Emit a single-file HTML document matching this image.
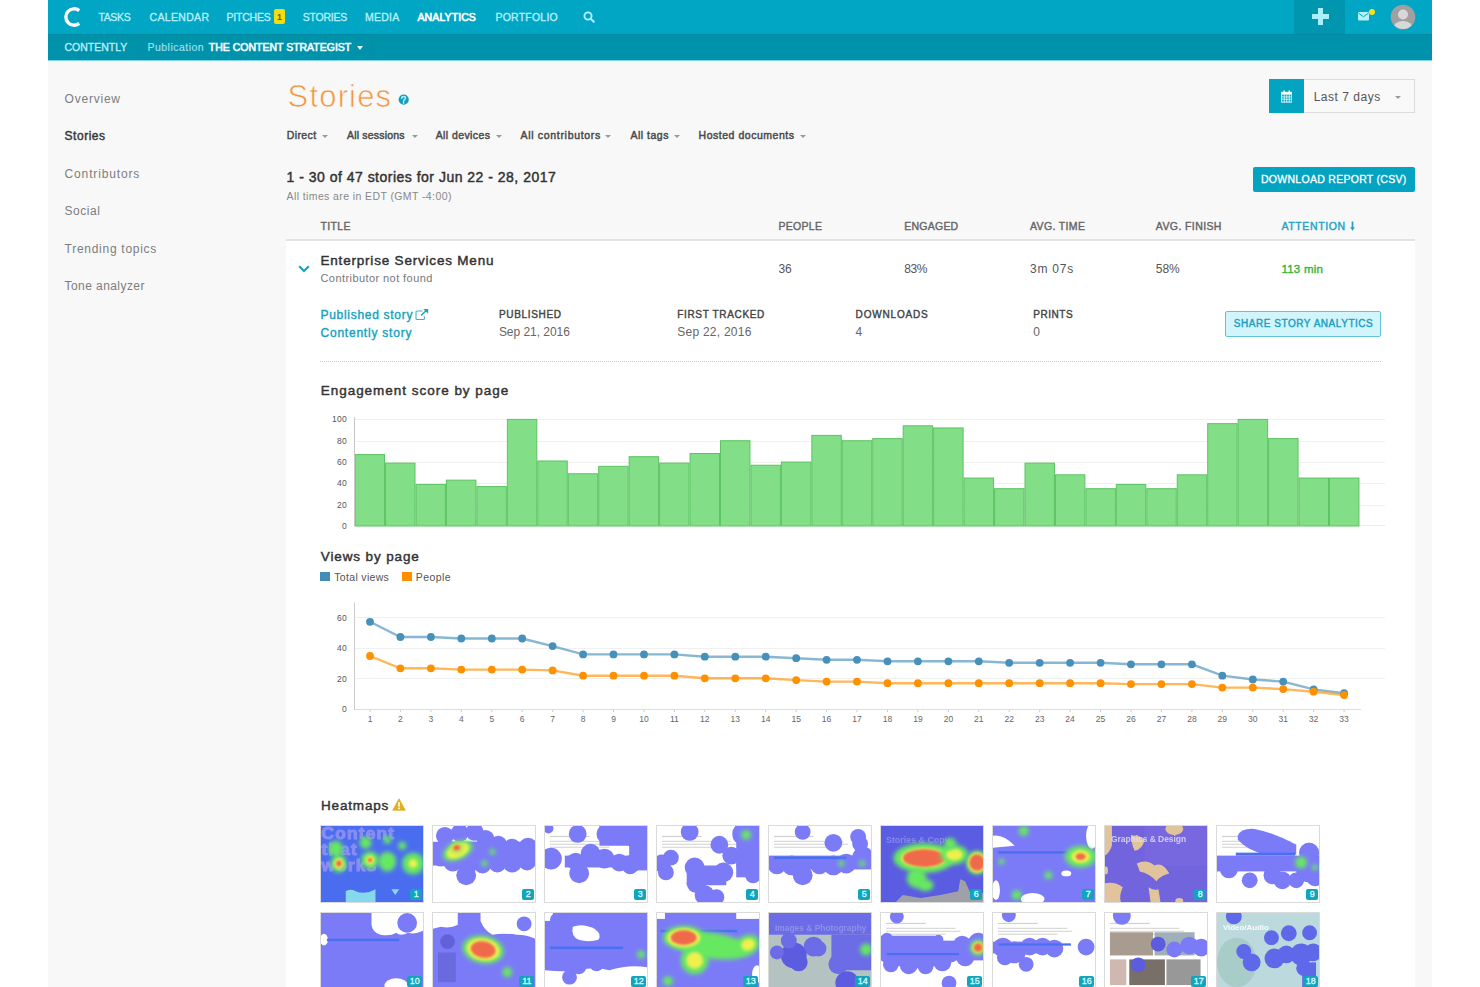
<!DOCTYPE html>
<html><head><meta charset="utf-8"><style>
html,body{margin:0;padding:0;background:#fff;width:1480px;height:987px;overflow:hidden;font-family:"Liberation Sans", sans-serif}
#app{position:absolute;left:48px;top:0;width:1384px;height:987px;background:#f8f8f8}
#nav{position:absolute;left:48px;top:0;width:1384px;height:34px;background:#02a6c5}
#sub{position:absolute;left:48px;top:34px;width:1384px;height:26px;background:#0092ab}
#subline{position:absolute;left:48px;top:60px;width:1384px;height:1px;background:#7fd6e6}
.t{position:absolute;white-space:nowrap;line-height:1;font-family:"Liberation Sans", sans-serif}
.caret{position:absolute;width:0;height:0}
.hm{position:absolute;width:104px;height:78px;border:1px solid #dadada;box-sizing:border-box;background:#fff;overflow:hidden}
.badge{position:absolute;right:1px;bottom:2px;width:12px;height:11px;border-radius:2px;background:#13a3bd;color:#d8fbff;font-size:9px;-webkit-text-stroke:0.3px #d8fbff;text-align:center;line-height:11px}
.b2{width:15px}
</style></head><body>
<div id="app"></div>
<div id="nav"></div>
<div id="sub"></div>
<div id="subline"></div>
<div style="position:absolute;left:48px;top:34px;width:1384px;height:1px;background:#038aa1"></div>
<div style="position:absolute;left:1294px;top:0;width:51px;height:34px;background:#0096b0"></div>
<div style="position:absolute;left:138px;top:34px;width:1px;height:26px;background:#078ca3"></div>
<div style="position:absolute;left:371.5px;top:34px;width:1px;height:26px;background:#078ca3"></div>
<svg style="position:absolute;left:62px;top:6px" width="20" height="22" viewBox="0 0 20 22"><path d="M17.2 4.6A8.2 8.2 0 1 0 17.2 17.4" fill="none" stroke="#fff" stroke-width="3.4"/></svg>
<svg style="position:absolute;left:1312px;top:8px" width="17" height="17" viewBox="0 0 17 17"><rect x="6" y="0" width="5" height="17" fill="#a8f0fc"/><rect x="0" y="6" width="17" height="5" fill="#a8f0fc"/></svg>
<svg style="position:absolute;left:1357px;top:8px" width="20" height="15" viewBox="0 0 20 15"><rect x="1" y="4" width="11" height="8.5" rx="1" fill="#b5f0fb"/><path d="M1.5 5L6.5 8.8L11.5 5" fill="none" stroke="#02a6c5" stroke-width="1"/><circle cx="15" cy="4" r="3" fill="#f3e220"/></svg>
<svg style="position:absolute;left:1390px;top:4px" width="26" height="26" viewBox="0 0 26 26"><defs><clipPath id="av"><circle cx="13" cy="13" r="12"/></clipPath></defs><circle cx="13" cy="13" r="12.3" fill="#a0a0a0"/><g clip-path="url(#av)"><circle cx="13" cy="10.5" r="5" fill="#d8d8d8"/><ellipse cx="13" cy="25" rx="10" ry="8" fill="#d8d8d8"/></g></svg>
<div class="t" style="left:98.4px;top:11.71px;font-size:10.5px;color:#b8f1fb;font-weight:normal;-webkit-text-stroke-width:0.3px;letter-spacing:-0.350px;">TASKS</div>
<div class="t" style="left:149.5px;top:11.71px;font-size:10.5px;color:#b8f1fb;font-weight:normal;-webkit-text-stroke-width:0.3px;letter-spacing:0.329px;">CALENDAR</div>
<div class="t" style="left:226.4px;top:11.71px;font-size:10.5px;color:#b8f1fb;font-weight:normal;-webkit-text-stroke-width:0.3px;letter-spacing:-0.183px;">PITCHES</div>
<div class="t" style="left:302.7px;top:11.71px;font-size:10.5px;color:#b8f1fb;font-weight:normal;-webkit-text-stroke-width:0.3px;letter-spacing:-0.233px;">STORIES</div>
<div class="t" style="left:365px;top:11.71px;font-size:10.5px;color:#b8f1fb;font-weight:normal;-webkit-text-stroke-width:0.3px;letter-spacing:0.250px;">MEDIA</div>
<div class="t" style="left:495.4px;top:11.71px;font-size:10.5px;color:#b8f1fb;font-weight:normal;-webkit-text-stroke-width:0.3px;letter-spacing:0.237px;">PORTFOLIO</div>
<div class="t" style="left:417.5px;top:11.71px;font-size:10.5px;color:#ffffff;font-weight:normal;-webkit-text-stroke-width:0.6px;letter-spacing:0.100px;">ANALYTICS</div>
<div style="position:absolute;left:274px;top:9px;width:11px;height:15px;background:#f3dc12;border-radius:2px;"></div>
<div class="t" style="left:277px;top:12.68px;font-size:9px;color:#5a5000;font-weight:normal;-webkit-text-stroke-width:0.2px;letter-spacing:0.000px;">1</div>
<svg style="position:absolute;left:583px;top:11px" width="12" height="12" viewBox="0 0 12 12"><circle cx="5" cy="5" r="3.6" fill="none" stroke="#b8f1fb" stroke-width="1.8"/><line x1="7.6" y1="7.6" x2="10.8" y2="10.8" stroke="#b8f1fb" stroke-width="2" stroke-linecap="round"/></svg>
<div class="t" style="left:64.5px;top:42.21px;font-size:10.5px;color:#b8f1fb;font-weight:normal;-webkit-text-stroke-width:0.3px;letter-spacing:-0.013px;">CONTENTLY</div>
<div class="t" style="left:147.5px;top:42.21px;font-size:10.5px;color:#9fe3f0;font-weight:normal;-webkit-text-stroke-width:0.15px;letter-spacing:0.480px;">Publication</div>
<div class="t" style="left:208.8px;top:42.21px;font-size:10.5px;color:#eefcff;font-weight:normal;-webkit-text-stroke-width:0.6px;letter-spacing:-0.005px;">THE CONTENT STRATEGIST</div>
<div class="caret" style="left:357.4px;top:45.5px;border-left:3.0px solid transparent;border-right:3.0px solid transparent;border-top:4px solid #e8fbff"></div>
<div class="t" style="left:64.6px;top:92.84px;font-size:12px;color:#7d7d7d;font-weight:normal;letter-spacing:0.771px;">Overview</div>
<div class="t" style="left:64.6px;top:130.34px;font-size:12px;color:#383838;font-weight:normal;-webkit-text-stroke-width:0.45px;letter-spacing:0.517px;">Stories</div>
<div class="t" style="left:64.6px;top:167.84px;font-size:12px;color:#7d7d7d;font-weight:normal;letter-spacing:0.845px;">Contributors</div>
<div class="t" style="left:64.6px;top:205.34px;font-size:12px;color:#7d7d7d;font-weight:normal;letter-spacing:0.520px;">Social</div>
<div class="t" style="left:64.6px;top:242.84px;font-size:12px;color:#7d7d7d;font-weight:normal;letter-spacing:0.721px;">Trending topics</div>
<div class="t" style="left:64.6px;top:280.34px;font-size:12px;color:#7d7d7d;font-weight:normal;letter-spacing:0.425px;">Tone analyzer</div>
<div class="t" style="left:287.6px;top:81.36px;font-size:31px;color:#f0963f;font-weight:normal;letter-spacing:1.167px;-webkit-text-stroke:0.7px #f8f8f8;">Stories</div>
<svg style="position:absolute;left:398px;top:94px" width="11" height="11" viewBox="0 0 11 11"><circle cx="5.7" cy="5.6" r="5.1" fill="#149fbf"/><path d="M3.7 4.3Q3.7 2.5 5.6 2.5Q7.5 2.5 7.5 4.1Q7.5 5.1 6.5 5.6Q5.6 6.1 5.6 7.2V7.6" fill="none" stroke="#aef4fc" stroke-width="1.5" stroke-linecap="round"/><circle cx="5.6" cy="8.9" r="0.85" fill="#aef4fc"/></svg>
<div class="t" style="left:286.7px;top:129.91px;font-size:10.5px;color:#4a4a4a;font-weight:normal;-webkit-text-stroke-width:0.45px;letter-spacing:0.420px;">Direct</div>
<div class="caret" style="left:322.4px;top:134.8px;border-left:3.0px solid transparent;border-right:3.0px solid transparent;border-top:3px solid #999"></div>
<div class="t" style="left:347px;top:129.91px;font-size:10.5px;color:#4a4a4a;font-weight:normal;-webkit-text-stroke-width:0.45px;letter-spacing:0.182px;">All sessions</div>
<div class="caret" style="left:411.6px;top:134.8px;border-left:3.0px solid transparent;border-right:3.0px solid transparent;border-top:3px solid #999"></div>
<div class="t" style="left:435.7px;top:129.91px;font-size:10.5px;color:#4a4a4a;font-weight:normal;-webkit-text-stroke-width:0.45px;letter-spacing:0.410px;">All devices</div>
<div class="caret" style="left:496.2px;top:134.8px;border-left:3.0px solid transparent;border-right:3.0px solid transparent;border-top:3px solid #999"></div>
<div class="t" style="left:520.5px;top:129.91px;font-size:10.5px;color:#4a4a4a;font-weight:normal;-webkit-text-stroke-width:0.45px;letter-spacing:0.687px;">All contributors</div>
<div class="caret" style="left:605.4px;top:134.8px;border-left:3.0px solid transparent;border-right:3.0px solid transparent;border-top:3px solid #999"></div>
<div class="t" style="left:630.5px;top:129.91px;font-size:10.5px;color:#4a4a4a;font-weight:normal;-webkit-text-stroke-width:0.45px;letter-spacing:0.500px;">All tags</div>
<div class="caret" style="left:673.8px;top:134.8px;border-left:3.0px solid transparent;border-right:3.0px solid transparent;border-top:3px solid #999"></div>
<div class="t" style="left:698.6px;top:129.91px;font-size:10.5px;color:#4a4a4a;font-weight:normal;-webkit-text-stroke-width:0.45px;letter-spacing:0.520px;">Hosted documents</div>
<div class="caret" style="left:800.3px;top:134.8px;border-left:3.0px solid transparent;border-right:3.0px solid transparent;border-top:3px solid #999"></div>
<div style="position:absolute;left:1269px;top:79px;width:146px;height:34px;border:1px solid #dcdcdc;background:#f9f9f9;box-sizing:border-box"></div>
<div style="position:absolute;left:1269px;top:79px;width:35px;height:34px;background:#03a3c2"></div>
<svg style="position:absolute;left:1280.5px;top:89.5px" width="11.5" height="13" viewBox="0 0 12 14"><rect x="0.5" y="2.5" width="11" height="10.5" fill="none" stroke="#fff" stroke-width="1"/><rect x="0.5" y="2.5" width="11" height="2.5" fill="#fff"/><rect x="2.5" y="0.5" width="1.5" height="3" fill="#fff"/><rect x="8" y="0.5" width="1.5" height="3" fill="#fff"/><path d="M0.5 7.5H11.5M0.5 10H11.5M3.3 5V13M6 5V13M8.7 5V13" stroke="#fff" stroke-width="0.8"/></svg>
<div class="t" style="left:1313.7px;top:90.84px;font-size:12px;color:#555;font-weight:normal;letter-spacing:0.510px;">Last 7 days</div>
<div class="caret" style="left:1395px;top:95.5px;border-left:3.0px solid transparent;border-right:3.0px solid transparent;border-top:3px solid #999"></div>
<div class="t" style="left:286.5px;top:170.45px;font-size:14px;color:#333;font-weight:normal;-webkit-text-stroke-width:0.45px;letter-spacing:0.493px;">1 - 30 of 47 stories for Jun 22 - 28, 2017</div>
<div class="t" style="left:286.5px;top:190.61px;font-size:10.5px;color:#888;font-weight:normal;letter-spacing:0.400px;">All times are in EDT (GMT -4:00)</div>
<div style="position:absolute;left:1252.5px;top:167px;width:162.5px;height:25px;background:#03a3c2;border-radius:2px"></div>
<div class="t" style="left:1261px;top:174.31px;font-size:10.5px;color:#ffffff;font-weight:normal;-webkit-text-stroke-width:0.3px;letter-spacing:0.280px;">DOWNLOAD REPORT (CSV)</div>
<div class="t" style="left:320.5px;top:221.31px;font-size:10.5px;color:#666;font-weight:normal;-webkit-text-stroke-width:0.4px;letter-spacing:0.375px;">TITLE</div>
<div class="t" style="left:778.4px;top:221.31px;font-size:10.5px;color:#666;font-weight:normal;-webkit-text-stroke-width:0.4px;letter-spacing:0.320px;">PEOPLE</div>
<div class="t" style="left:904.3px;top:221.31px;font-size:10.5px;color:#666;font-weight:normal;-webkit-text-stroke-width:0.4px;letter-spacing:0.233px;">ENGAGED</div>
<div class="t" style="left:1030px;top:221.31px;font-size:10.5px;color:#666;font-weight:normal;-webkit-text-stroke-width:0.4px;letter-spacing:0.350px;">AVG. TIME</div>
<div class="t" style="left:1155.8px;top:221.31px;font-size:10.5px;color:#666;font-weight:normal;-webkit-text-stroke-width:0.4px;letter-spacing:0.400px;">AVG. FINISH</div>
<div class="t" style="left:1281.5px;top:221.31px;font-size:10.5px;color:#1aa3c4;font-weight:normal;-webkit-text-stroke-width:0.4px;letter-spacing:0.600px;">ATTENTION</div>
<svg style="position:absolute;left:1349px;top:221px" width="7" height="11" viewBox="0 0 7 11"><line x1="3.5" y1="0.5" x2="3.5" y2="7" stroke="#1aa3c4" stroke-width="1.7"/><path d="M1.2 6.2H5.8L3.5 9.8Z" fill="#1aa3c4"/></svg>
<div style="position:absolute;left:286px;top:239px;width:1129px;height:760px;background:#fff;border-top:2px solid #e3e3e3"></div>
<svg style="position:absolute;left:298px;top:264.5px" width="12" height="8" viewBox="0 0 12 8"><path d="M1.2 1.2L6 6L10.8 1.2" fill="none" stroke="#16a2c2" stroke-width="2.2"/></svg>
<div class="t" style="left:320.5px;top:253.57px;font-size:13.5px;color:#333;font-weight:normal;-webkit-text-stroke-width:0.45px;letter-spacing:0.800px;">Enterprise Services Menu</div>
<div class="t" style="left:320.5px;top:273.09px;font-size:11px;color:#777;font-weight:normal;letter-spacing:0.425px;">Contributor not found</div>
<div class="t" style="left:778.4px;top:263.24px;font-size:12px;color:#555;font-weight:normal;letter-spacing:0.000px;">36</div>
<div class="t" style="left:904.3px;top:263.24px;font-size:12px;color:#555;font-weight:normal;letter-spacing:-0.450px;">83%</div>
<div class="t" style="left:1030px;top:263.24px;font-size:12px;color:#555;font-weight:normal;letter-spacing:0.780px;">3m 07s</div>
<div class="t" style="left:1155.8px;top:263.24px;font-size:12px;color:#555;font-weight:normal;letter-spacing:-0.050px;">58%</div>
<div class="t" style="left:1281.5px;top:263.67px;font-size:11.5px;color:#3bb33b;font-weight:normal;-webkit-text-stroke-width:0.4px;letter-spacing:0.217px;">113 min</div>
<div class="t" style="left:320.5px;top:308.74px;font-size:12px;color:#18a2c0;font-weight:normal;-webkit-text-stroke-width:0.4px;letter-spacing:0.707px;">Published story</div>
<svg style="position:absolute;left:415px;top:308px" width="14" height="13" viewBox="0 0 14 13"><path d="M9.4 8.3V10.4Q9.4 11.5 8.3 11.5H2.1Q1 11.5 1 10.4V4.1Q1 3 2.1 3H7.3" fill="none" stroke="#4aaec6" stroke-width="1.1"/><path d="M6 7.6L11.2 2.4" stroke="#18a2c0" stroke-width="1.4"/><path d="M8.2 0.9H13.1V5.8Z" fill="#18a2c0"/></svg>
<div class="t" style="left:320.5px;top:327.34px;font-size:12px;color:#18a2c0;font-weight:normal;-webkit-text-stroke-width:0.4px;letter-spacing:0.779px;">Contently story</div>
<div class="t" style="left:498.9px;top:310.34px;font-size:10px;color:#444;font-weight:normal;-webkit-text-stroke-width:0.4px;letter-spacing:0.688px;">PUBLISHED</div>
<div class="t" style="left:498.9px;top:325.74px;font-size:12px;color:#666;font-weight:normal;letter-spacing:-0.036px;">Sep 21, 2016</div>
<div class="t" style="left:677.2px;top:310.34px;font-size:10px;color:#444;font-weight:normal;-webkit-text-stroke-width:0.4px;letter-spacing:0.667px;">FIRST TRACKED</div>
<div class="t" style="left:677.2px;top:325.74px;font-size:12px;color:#666;font-weight:normal;letter-spacing:0.255px;">Sep 22, 2016</div>
<div class="t" style="left:855.6px;top:310.34px;font-size:10px;color:#444;font-weight:normal;-webkit-text-stroke-width:0.4px;letter-spacing:0.825px;">DOWNLOADS</div>
<div class="t" style="left:855.6px;top:325.74px;font-size:12px;color:#666;font-weight:normal;letter-spacing:0.300px;">4</div>
<div class="t" style="left:1033.2px;top:310.34px;font-size:10px;color:#444;font-weight:normal;-webkit-text-stroke-width:0.4px;letter-spacing:0.560px;">PRINTS</div>
<div class="t" style="left:1033.2px;top:325.74px;font-size:12px;color:#666;font-weight:normal;letter-spacing:0.300px;">0</div>
<div style="position:absolute;left:1225px;top:311px;width:156px;height:26px;background:#d2f4fb;border:1px solid #62c2d6;border-radius:2px;box-sizing:border-box"></div>
<div class="t" style="left:1233.8px;top:319.34px;font-size:10px;color:#1a9fc0;font-weight:normal;-webkit-text-stroke-width:0.4px;letter-spacing:0.540px;">SHARE STORY ANALYTICS</div>
<div style="position:absolute;left:320px;top:361px;width:1061px;height:0;border-top:1px dotted #c8c8c8"></div>
<div class="t" style="left:320.7px;top:383.97px;font-size:13.5px;color:#333;font-weight:normal;-webkit-text-stroke-width:0.45px;letter-spacing:0.978px;">Engagement score by page</div>
<div class="t" style="left:320.8px;top:550.17px;font-size:13.5px;color:#333;font-weight:normal;-webkit-text-stroke-width:0.45px;letter-spacing:0.875px;">Views by page</div>
<div class="t" style="left:321px;top:798.57px;font-size:13.5px;color:#333;font-weight:normal;-webkit-text-stroke-width:0.45px;letter-spacing:0.829px;">Heatmaps</div>
<svg style="position:absolute;left:392px;top:798px" width="14" height="13" viewBox="0 0 14 13"><path d="M7 0.8L13.3 12.2H0.7Z" fill="#e0b020" stroke="#e0b020" stroke-width="0.8" stroke-linejoin="round"/><rect x="6.2" y="4.2" width="1.6" height="4.5" fill="#fff"/><rect x="6.2" y="9.6" width="1.6" height="1.6" fill="#fff"/></svg>
<div style="position:absolute;left:320.3px;top:572px;width:9.5px;height:9px;background:#428dba"></div>
<div class="t" style="left:334.3px;top:571.61px;font-size:10.5px;color:#555;font-weight:normal;letter-spacing:0.320px;">Total views</div>
<div style="position:absolute;left:402px;top:572px;width:9.5px;height:9px;background:#ff8f00"></div>
<div class="t" style="left:415.7px;top:571.61px;font-size:10.5px;color:#555;font-weight:normal;letter-spacing:0.460px;">People</div>
<svg style="position:absolute;left:0;top:0" width="1480" height="987" viewBox="0 0 1480 987">
<line x1="355" y1="505.5" x2="1385" y2="505.5" stroke="#f0f0f0" stroke-width="1"/>
<line x1="355" y1="483.5" x2="1385" y2="483.5" stroke="#f0f0f0" stroke-width="1"/>
<line x1="355" y1="462.5" x2="1385" y2="462.5" stroke="#f0f0f0" stroke-width="1"/>
<line x1="355" y1="441.5" x2="1385" y2="441.5" stroke="#f0f0f0" stroke-width="1"/>
<line x1="355" y1="419.5" x2="1385" y2="419.5" stroke="#f0f0f0" stroke-width="1"/>
<line x1="355" y1="525.5" x2="1385" y2="525.5" stroke="#eaeaea" stroke-width="1"/>
<text x="347" y="529.0" font-size="8.5" text-anchor="end" fill="#555" font-family="Liberation Sans" letter-spacing="0.3">0</text>
<text x="347" y="507.7" font-size="8.5" text-anchor="end" fill="#555" font-family="Liberation Sans" letter-spacing="0.3">20</text>
<text x="347" y="486.4" font-size="8.5" text-anchor="end" fill="#555" font-family="Liberation Sans" letter-spacing="0.3">40</text>
<text x="347" y="465.0" font-size="8.5" text-anchor="end" fill="#555" font-family="Liberation Sans" letter-spacing="0.3">60</text>
<text x="347" y="443.7" font-size="8.5" text-anchor="end" fill="#555" font-family="Liberation Sans" letter-spacing="0.3">80</text>
<text x="347" y="422.4" font-size="8.5" text-anchor="end" fill="#555" font-family="Liberation Sans" letter-spacing="0.3">100</text>
<rect x="355.10" y="454.58" width="29.45" height="71.42" fill="#82de87" stroke="#5cc462" stroke-width="1"/>
<rect x="385.55" y="463.11" width="29.45" height="62.89" fill="#82de87" stroke="#5cc462" stroke-width="1"/>
<rect x="416.00" y="484.43" width="29.45" height="41.57" fill="#82de87" stroke="#5cc462" stroke-width="1"/>
<rect x="446.45" y="480.16" width="29.45" height="45.84" fill="#82de87" stroke="#5cc462" stroke-width="1"/>
<rect x="476.90" y="486.56" width="29.45" height="39.44" fill="#82de87" stroke="#5cc462" stroke-width="1"/>
<rect x="507.35" y="419.40" width="29.45" height="106.60" fill="#82de87" stroke="#5cc462" stroke-width="1"/>
<rect x="537.80" y="460.97" width="29.45" height="65.03" fill="#82de87" stroke="#5cc462" stroke-width="1"/>
<rect x="568.25" y="473.77" width="29.45" height="52.23" fill="#82de87" stroke="#5cc462" stroke-width="1"/>
<rect x="598.70" y="466.30" width="29.45" height="59.70" fill="#82de87" stroke="#5cc462" stroke-width="1"/>
<rect x="629.15" y="456.71" width="29.45" height="69.29" fill="#82de87" stroke="#5cc462" stroke-width="1"/>
<rect x="659.60" y="463.11" width="29.45" height="62.89" fill="#82de87" stroke="#5cc462" stroke-width="1"/>
<rect x="690.05" y="453.51" width="29.45" height="72.49" fill="#82de87" stroke="#5cc462" stroke-width="1"/>
<rect x="720.50" y="440.72" width="29.45" height="85.28" fill="#82de87" stroke="#5cc462" stroke-width="1"/>
<rect x="750.95" y="465.24" width="29.45" height="60.76" fill="#82de87" stroke="#5cc462" stroke-width="1"/>
<rect x="781.40" y="462.04" width="29.45" height="63.96" fill="#82de87" stroke="#5cc462" stroke-width="1"/>
<rect x="811.85" y="435.39" width="29.45" height="90.61" fill="#82de87" stroke="#5cc462" stroke-width="1"/>
<rect x="842.30" y="440.72" width="29.45" height="85.28" fill="#82de87" stroke="#5cc462" stroke-width="1"/>
<rect x="872.75" y="438.59" width="29.45" height="87.41" fill="#82de87" stroke="#5cc462" stroke-width="1"/>
<rect x="903.20" y="425.80" width="29.45" height="100.20" fill="#82de87" stroke="#5cc462" stroke-width="1"/>
<rect x="933.65" y="427.93" width="29.45" height="98.07" fill="#82de87" stroke="#5cc462" stroke-width="1"/>
<rect x="964.10" y="478.03" width="29.45" height="47.97" fill="#82de87" stroke="#5cc462" stroke-width="1"/>
<rect x="994.55" y="488.69" width="29.45" height="37.31" fill="#82de87" stroke="#5cc462" stroke-width="1"/>
<rect x="1025.00" y="463.11" width="29.45" height="62.89" fill="#82de87" stroke="#5cc462" stroke-width="1"/>
<rect x="1055.45" y="474.83" width="29.45" height="51.17" fill="#82de87" stroke="#5cc462" stroke-width="1"/>
<rect x="1085.90" y="488.69" width="29.45" height="37.31" fill="#82de87" stroke="#5cc462" stroke-width="1"/>
<rect x="1116.35" y="484.43" width="29.45" height="41.57" fill="#82de87" stroke="#5cc462" stroke-width="1"/>
<rect x="1146.80" y="488.69" width="29.45" height="37.31" fill="#82de87" stroke="#5cc462" stroke-width="1"/>
<rect x="1177.25" y="474.83" width="29.45" height="51.17" fill="#82de87" stroke="#5cc462" stroke-width="1"/>
<rect x="1207.70" y="423.66" width="29.45" height="102.34" fill="#82de87" stroke="#5cc462" stroke-width="1"/>
<rect x="1238.15" y="419.40" width="29.45" height="106.60" fill="#82de87" stroke="#5cc462" stroke-width="1"/>
<rect x="1268.60" y="438.59" width="29.45" height="87.41" fill="#82de87" stroke="#5cc462" stroke-width="1"/>
<rect x="1299.05" y="478.03" width="29.45" height="47.97" fill="#82de87" stroke="#5cc462" stroke-width="1"/>
<rect x="1329.50" y="478.03" width="29.45" height="47.97" fill="#82de87" stroke="#5cc462" stroke-width="1"/>
<line x1="354.5" y1="417" x2="354.5" y2="526" stroke="#c8c8c8" stroke-width="1"/>
<line x1="355" y1="678.5" x2="1385" y2="678.5" stroke="#f0f0f0" stroke-width="1"/>
<line x1="355" y1="648.5" x2="1385" y2="648.5" stroke="#f0f0f0" stroke-width="1"/>
<line x1="355" y1="617.5" x2="1385" y2="617.5" stroke="#f0f0f0" stroke-width="1"/>
<line x1="355" y1="709.5" x2="1361" y2="709.5" stroke="#ddd" stroke-width="1"/>
<line x1="354.5" y1="602.5" x2="354.5" y2="710" stroke="#ccc" stroke-width="1"/>
<text x="347" y="712.0" font-size="8.5" text-anchor="end" fill="#555" font-family="Liberation Sans" letter-spacing="0.3">0</text>
<text x="347" y="681.6" font-size="8.5" text-anchor="end" fill="#555" font-family="Liberation Sans" letter-spacing="0.3">20</text>
<text x="347" y="651.2" font-size="8.5" text-anchor="end" fill="#555" font-family="Liberation Sans" letter-spacing="0.3">40</text>
<text x="347" y="620.8" font-size="8.5" text-anchor="end" fill="#555" font-family="Liberation Sans" letter-spacing="0.3">60</text>
<line x1="370.0" y1="710" x2="370.0" y2="712" stroke="#ccc" stroke-width="1"/>
<text x="370.0" y="722" font-size="8.5" text-anchor="middle" fill="#666" font-family="Liberation Sans">1</text>
<line x1="400.4" y1="710" x2="400.4" y2="712" stroke="#ccc" stroke-width="1"/>
<text x="400.4" y="722" font-size="8.5" text-anchor="middle" fill="#666" font-family="Liberation Sans">2</text>
<line x1="430.9" y1="710" x2="430.9" y2="712" stroke="#ccc" stroke-width="1"/>
<text x="430.9" y="722" font-size="8.5" text-anchor="middle" fill="#666" font-family="Liberation Sans">3</text>
<line x1="461.3" y1="710" x2="461.3" y2="712" stroke="#ccc" stroke-width="1"/>
<text x="461.3" y="722" font-size="8.5" text-anchor="middle" fill="#666" font-family="Liberation Sans">4</text>
<line x1="491.8" y1="710" x2="491.8" y2="712" stroke="#ccc" stroke-width="1"/>
<text x="491.8" y="722" font-size="8.5" text-anchor="middle" fill="#666" font-family="Liberation Sans">5</text>
<line x1="522.2" y1="710" x2="522.2" y2="712" stroke="#ccc" stroke-width="1"/>
<text x="522.2" y="722" font-size="8.5" text-anchor="middle" fill="#666" font-family="Liberation Sans">6</text>
<line x1="552.6" y1="710" x2="552.6" y2="712" stroke="#ccc" stroke-width="1"/>
<text x="552.6" y="722" font-size="8.5" text-anchor="middle" fill="#666" font-family="Liberation Sans">7</text>
<line x1="583.1" y1="710" x2="583.1" y2="712" stroke="#ccc" stroke-width="1"/>
<text x="583.1" y="722" font-size="8.5" text-anchor="middle" fill="#666" font-family="Liberation Sans">8</text>
<line x1="613.5" y1="710" x2="613.5" y2="712" stroke="#ccc" stroke-width="1"/>
<text x="613.5" y="722" font-size="8.5" text-anchor="middle" fill="#666" font-family="Liberation Sans">9</text>
<line x1="644.0" y1="710" x2="644.0" y2="712" stroke="#ccc" stroke-width="1"/>
<text x="644.0" y="722" font-size="8.5" text-anchor="middle" fill="#666" font-family="Liberation Sans">10</text>
<line x1="674.4" y1="710" x2="674.4" y2="712" stroke="#ccc" stroke-width="1"/>
<text x="674.4" y="722" font-size="8.5" text-anchor="middle" fill="#666" font-family="Liberation Sans">11</text>
<line x1="704.8" y1="710" x2="704.8" y2="712" stroke="#ccc" stroke-width="1"/>
<text x="704.8" y="722" font-size="8.5" text-anchor="middle" fill="#666" font-family="Liberation Sans">12</text>
<line x1="735.3" y1="710" x2="735.3" y2="712" stroke="#ccc" stroke-width="1"/>
<text x="735.3" y="722" font-size="8.5" text-anchor="middle" fill="#666" font-family="Liberation Sans">13</text>
<line x1="765.7" y1="710" x2="765.7" y2="712" stroke="#ccc" stroke-width="1"/>
<text x="765.7" y="722" font-size="8.5" text-anchor="middle" fill="#666" font-family="Liberation Sans">14</text>
<line x1="796.2" y1="710" x2="796.2" y2="712" stroke="#ccc" stroke-width="1"/>
<text x="796.2" y="722" font-size="8.5" text-anchor="middle" fill="#666" font-family="Liberation Sans">15</text>
<line x1="826.6" y1="710" x2="826.6" y2="712" stroke="#ccc" stroke-width="1"/>
<text x="826.6" y="722" font-size="8.5" text-anchor="middle" fill="#666" font-family="Liberation Sans">16</text>
<line x1="857.0" y1="710" x2="857.0" y2="712" stroke="#ccc" stroke-width="1"/>
<text x="857.0" y="722" font-size="8.5" text-anchor="middle" fill="#666" font-family="Liberation Sans">17</text>
<line x1="887.5" y1="710" x2="887.5" y2="712" stroke="#ccc" stroke-width="1"/>
<text x="887.5" y="722" font-size="8.5" text-anchor="middle" fill="#666" font-family="Liberation Sans">18</text>
<line x1="917.9" y1="710" x2="917.9" y2="712" stroke="#ccc" stroke-width="1"/>
<text x="917.9" y="722" font-size="8.5" text-anchor="middle" fill="#666" font-family="Liberation Sans">19</text>
<line x1="948.4" y1="710" x2="948.4" y2="712" stroke="#ccc" stroke-width="1"/>
<text x="948.4" y="722" font-size="8.5" text-anchor="middle" fill="#666" font-family="Liberation Sans">20</text>
<line x1="978.8" y1="710" x2="978.8" y2="712" stroke="#ccc" stroke-width="1"/>
<text x="978.8" y="722" font-size="8.5" text-anchor="middle" fill="#666" font-family="Liberation Sans">21</text>
<line x1="1009.2" y1="710" x2="1009.2" y2="712" stroke="#ccc" stroke-width="1"/>
<text x="1009.2" y="722" font-size="8.5" text-anchor="middle" fill="#666" font-family="Liberation Sans">22</text>
<line x1="1039.7" y1="710" x2="1039.7" y2="712" stroke="#ccc" stroke-width="1"/>
<text x="1039.7" y="722" font-size="8.5" text-anchor="middle" fill="#666" font-family="Liberation Sans">23</text>
<line x1="1070.1" y1="710" x2="1070.1" y2="712" stroke="#ccc" stroke-width="1"/>
<text x="1070.1" y="722" font-size="8.5" text-anchor="middle" fill="#666" font-family="Liberation Sans">24</text>
<line x1="1100.6" y1="710" x2="1100.6" y2="712" stroke="#ccc" stroke-width="1"/>
<text x="1100.6" y="722" font-size="8.5" text-anchor="middle" fill="#666" font-family="Liberation Sans">25</text>
<line x1="1131.0" y1="710" x2="1131.0" y2="712" stroke="#ccc" stroke-width="1"/>
<text x="1131.0" y="722" font-size="8.5" text-anchor="middle" fill="#666" font-family="Liberation Sans">26</text>
<line x1="1161.4" y1="710" x2="1161.4" y2="712" stroke="#ccc" stroke-width="1"/>
<text x="1161.4" y="722" font-size="8.5" text-anchor="middle" fill="#666" font-family="Liberation Sans">27</text>
<line x1="1191.9" y1="710" x2="1191.9" y2="712" stroke="#ccc" stroke-width="1"/>
<text x="1191.9" y="722" font-size="8.5" text-anchor="middle" fill="#666" font-family="Liberation Sans">28</text>
<line x1="1222.3" y1="710" x2="1222.3" y2="712" stroke="#ccc" stroke-width="1"/>
<text x="1222.3" y="722" font-size="8.5" text-anchor="middle" fill="#666" font-family="Liberation Sans">29</text>
<line x1="1252.8" y1="710" x2="1252.8" y2="712" stroke="#ccc" stroke-width="1"/>
<text x="1252.8" y="722" font-size="8.5" text-anchor="middle" fill="#666" font-family="Liberation Sans">30</text>
<line x1="1283.2" y1="710" x2="1283.2" y2="712" stroke="#ccc" stroke-width="1"/>
<text x="1283.2" y="722" font-size="8.5" text-anchor="middle" fill="#666" font-family="Liberation Sans">31</text>
<line x1="1313.6" y1="710" x2="1313.6" y2="712" stroke="#ccc" stroke-width="1"/>
<text x="1313.6" y="722" font-size="8.5" text-anchor="middle" fill="#666" font-family="Liberation Sans">32</text>
<line x1="1344.1" y1="710" x2="1344.1" y2="712" stroke="#ccc" stroke-width="1"/>
<text x="1344.1" y="722" font-size="8.5" text-anchor="middle" fill="#666" font-family="Liberation Sans">33</text>
<polyline points="370.0,621.8 400.4,637.0 430.9,637.0 461.3,638.5 491.8,638.5 522.2,638.5 552.6,646.1 583.1,654.4 613.5,654.4 644.0,654.4 674.4,654.4 704.8,656.7 735.3,656.7 765.7,656.7 796.2,658.2 826.6,659.8 857.0,659.8 887.5,661.3 917.9,661.3 948.4,661.3 978.8,661.3 1009.2,662.8 1039.7,662.8 1070.1,662.8 1100.6,662.8 1131.0,664.3 1161.4,664.3 1191.9,664.3 1222.3,675.7 1252.8,679.5 1283.2,681.6 1313.6,689.4 1344.1,693.2" fill="none" stroke="#4790ba" stroke-opacity="0.65" stroke-width="2.4"/>
<circle cx="370.0" cy="621.8" r="3.9" fill="#4790ba"/>
<circle cx="400.4" cy="637.0" r="3.9" fill="#4790ba"/>
<circle cx="430.9" cy="637.0" r="3.9" fill="#4790ba"/>
<circle cx="461.3" cy="638.5" r="3.9" fill="#4790ba"/>
<circle cx="491.8" cy="638.5" r="3.9" fill="#4790ba"/>
<circle cx="522.2" cy="638.5" r="3.9" fill="#4790ba"/>
<circle cx="552.6" cy="646.1" r="3.9" fill="#4790ba"/>
<circle cx="583.1" cy="654.4" r="3.9" fill="#4790ba"/>
<circle cx="613.5" cy="654.4" r="3.9" fill="#4790ba"/>
<circle cx="644.0" cy="654.4" r="3.9" fill="#4790ba"/>
<circle cx="674.4" cy="654.4" r="3.9" fill="#4790ba"/>
<circle cx="704.8" cy="656.7" r="3.9" fill="#4790ba"/>
<circle cx="735.3" cy="656.7" r="3.9" fill="#4790ba"/>
<circle cx="765.7" cy="656.7" r="3.9" fill="#4790ba"/>
<circle cx="796.2" cy="658.2" r="3.9" fill="#4790ba"/>
<circle cx="826.6" cy="659.8" r="3.9" fill="#4790ba"/>
<circle cx="857.0" cy="659.8" r="3.9" fill="#4790ba"/>
<circle cx="887.5" cy="661.3" r="3.9" fill="#4790ba"/>
<circle cx="917.9" cy="661.3" r="3.9" fill="#4790ba"/>
<circle cx="948.4" cy="661.3" r="3.9" fill="#4790ba"/>
<circle cx="978.8" cy="661.3" r="3.9" fill="#4790ba"/>
<circle cx="1009.2" cy="662.8" r="3.9" fill="#4790ba"/>
<circle cx="1039.7" cy="662.8" r="3.9" fill="#4790ba"/>
<circle cx="1070.1" cy="662.8" r="3.9" fill="#4790ba"/>
<circle cx="1100.6" cy="662.8" r="3.9" fill="#4790ba"/>
<circle cx="1131.0" cy="664.3" r="3.9" fill="#4790ba"/>
<circle cx="1161.4" cy="664.3" r="3.9" fill="#4790ba"/>
<circle cx="1191.9" cy="664.3" r="3.9" fill="#4790ba"/>
<circle cx="1222.3" cy="675.7" r="3.9" fill="#4790ba"/>
<circle cx="1252.8" cy="679.5" r="3.9" fill="#4790ba"/>
<circle cx="1283.2" cy="681.6" r="3.9" fill="#4790ba"/>
<circle cx="1313.6" cy="689.4" r="3.9" fill="#4790ba"/>
<circle cx="1344.1" cy="693.2" r="3.9" fill="#4790ba"/>
<polyline points="370.0,656.0 400.4,668.3 430.9,668.3 461.3,669.6 491.8,669.6 522.2,669.6 552.6,670.4 583.1,675.7 613.5,675.7 644.0,675.7 674.4,675.7 704.8,678.3 735.3,678.3 765.7,678.3 796.2,680.1 826.6,681.6 857.0,681.6 887.5,683.2 917.9,683.2 948.4,683.2 978.8,683.2 1009.2,683.2 1039.7,683.2 1070.1,683.2 1100.6,683.2 1131.0,684.1 1161.4,684.1 1191.9,684.1 1222.3,687.6 1252.8,687.6 1283.2,689.1 1313.6,691.7 1344.1,695.0" fill="none" stroke="#ff9000" stroke-opacity="0.65" stroke-width="2.4"/>
<circle cx="370.0" cy="656.0" r="3.9" fill="#ff9000"/>
<circle cx="400.4" cy="668.3" r="3.9" fill="#ff9000"/>
<circle cx="430.9" cy="668.3" r="3.9" fill="#ff9000"/>
<circle cx="461.3" cy="669.6" r="3.9" fill="#ff9000"/>
<circle cx="491.8" cy="669.6" r="3.9" fill="#ff9000"/>
<circle cx="522.2" cy="669.6" r="3.9" fill="#ff9000"/>
<circle cx="552.6" cy="670.4" r="3.9" fill="#ff9000"/>
<circle cx="583.1" cy="675.7" r="3.9" fill="#ff9000"/>
<circle cx="613.5" cy="675.7" r="3.9" fill="#ff9000"/>
<circle cx="644.0" cy="675.7" r="3.9" fill="#ff9000"/>
<circle cx="674.4" cy="675.7" r="3.9" fill="#ff9000"/>
<circle cx="704.8" cy="678.3" r="3.9" fill="#ff9000"/>
<circle cx="735.3" cy="678.3" r="3.9" fill="#ff9000"/>
<circle cx="765.7" cy="678.3" r="3.9" fill="#ff9000"/>
<circle cx="796.2" cy="680.1" r="3.9" fill="#ff9000"/>
<circle cx="826.6" cy="681.6" r="3.9" fill="#ff9000"/>
<circle cx="857.0" cy="681.6" r="3.9" fill="#ff9000"/>
<circle cx="887.5" cy="683.2" r="3.9" fill="#ff9000"/>
<circle cx="917.9" cy="683.2" r="3.9" fill="#ff9000"/>
<circle cx="948.4" cy="683.2" r="3.9" fill="#ff9000"/>
<circle cx="978.8" cy="683.2" r="3.9" fill="#ff9000"/>
<circle cx="1009.2" cy="683.2" r="3.9" fill="#ff9000"/>
<circle cx="1039.7" cy="683.2" r="3.9" fill="#ff9000"/>
<circle cx="1070.1" cy="683.2" r="3.9" fill="#ff9000"/>
<circle cx="1100.6" cy="683.2" r="3.9" fill="#ff9000"/>
<circle cx="1131.0" cy="684.1" r="3.9" fill="#ff9000"/>
<circle cx="1161.4" cy="684.1" r="3.9" fill="#ff9000"/>
<circle cx="1191.9" cy="684.1" r="3.9" fill="#ff9000"/>
<circle cx="1222.3" cy="687.6" r="3.9" fill="#ff9000"/>
<circle cx="1252.8" cy="687.6" r="3.9" fill="#ff9000"/>
<circle cx="1283.2" cy="689.1" r="3.9" fill="#ff9000"/>
<circle cx="1313.6" cy="691.7" r="3.9" fill="#ff9000"/>
<circle cx="1344.1" cy="695.0" r="3.9" fill="#ff9000"/>
</svg>
<svg width="0" height="0" style="position:absolute"><defs><filter id="b1" x="-50%" y="-50%" width="200%" height="200%"><feGaussianBlur stdDeviation="1"/></filter><filter id="b15" x="-50%" y="-50%" width="200%" height="200%"><feGaussianBlur stdDeviation="1.5"/></filter><filter id="b2" x="-50%" y="-50%" width="200%" height="200%"><feGaussianBlur stdDeviation="2"/></filter></defs></svg>
<div class="hm" style="left:320.3px;top:825px">
<svg width="102" height="76" viewBox="0 0 103 77" preserveAspectRatio="none" style="position:absolute;left:0;top:0"><rect x="0" y="0" width="103" height="77" fill="#4a6df0" opacity="1"/><text x="0.5" y="13" font-size="17.5" font-weight="bold" letter-spacing="1.2" stroke="#9090f2" stroke-width="1.1" fill="#9090f2" opacity="0.9" font-family="Liberation Sans">Content</text><text x="0.5" y="29" font-size="17.5" font-weight="bold" letter-spacing="1.2" stroke="#9090f2" stroke-width="1.1" fill="#9090f2" opacity="0.9" font-family="Liberation Sans">that</text><text x="0.5" y="46" font-size="17.5" font-weight="bold" letter-spacing="1.2" stroke="#9090f2" stroke-width="1.1" fill="#9090f2" opacity="0.9" font-family="Liberation Sans">works</text><path d="M25 77V66Q30 63 35 66Q45 70 55 64V77Z" fill="#86d8ee"/><path d="M71 64L79 64L75 70Z" fill="#86d8ee"/><ellipse cx="15" cy="23" rx="7" ry="8" fill="#66e860" filter="url(#b2)"/><ellipse cx="18" cy="38" rx="8" ry="9" fill="#66e860" filter="url(#b2)"/><ellipse cx="18" cy="38" rx="4.8" ry="5.4" fill="#eef04e" filter="url(#b15)"/><ellipse cx="18" cy="38" rx="2.8" ry="3.1" fill="#ef6a4c" filter="url(#b1)"/><ellipse cx="49.5" cy="34.5" rx="9" ry="9" fill="#66e860" filter="url(#b2)"/><ellipse cx="49.5" cy="34.5" rx="4.5" ry="4.5" fill="#eef04e" filter="url(#b15)"/><ellipse cx="49.5" cy="34.5" rx="2.2" ry="2.2" fill="#ef6a4c" filter="url(#b1)"/><ellipse cx="67" cy="36" rx="9" ry="10" fill="#66e860" filter="url(#b2)"/><ellipse cx="93" cy="38" rx="11" ry="11" fill="#66e860" filter="url(#b2)"/><ellipse cx="93" cy="38" rx="4.4" ry="4.4" fill="#eef04e" filter="url(#b15)"/><ellipse cx="45" cy="17" rx="6" ry="6" fill="#66e860" filter="url(#b2)"/><ellipse cx="67" cy="14" rx="4" ry="4" fill="#66e860" filter="url(#b2)"/><ellipse cx="82" cy="20" rx="4" ry="4" fill="#66e860" filter="url(#b2)"/></svg>
<div class="badge">1</div></div>
<div class="hm" style="left:432.3px;top:825px">
<svg width="102" height="76" viewBox="0 0 103 77" preserveAspectRatio="none" style="position:absolute;left:0;top:0"><rect x="5" y="10" width="40" height="1.2" fill="#d0d0d0" opacity="1"/><rect x="5" y="15" width="70" height="1" fill="#d0d0d0" opacity="1"/><rect x="5" y="18" width="75" height="1" fill="#d0d0d0" opacity="1"/><rect x="5" y="21" width="60" height="1" fill="#d0d0d0" opacity="1"/><circle cx="12" cy="10" r="9" fill="#7b7bf7"/><circle cx="27" cy="7" r="9" fill="#7b7bf7"/><circle cx="42" cy="6" r="9" fill="#7b7bf7"/><circle cx="53" cy="13" r="9" fill="#7b7bf7"/><circle cx="66" cy="19" r="9" fill="#7b7bf7"/><circle cx="80" cy="22" r="9" fill="#7b7bf7"/><circle cx="96" cy="22" r="10" fill="#7b7bf7"/><circle cx="8" cy="31" r="10" fill="#7b7bf7"/><circle cx="20" cy="36" r="10" fill="#7b7bf7"/><circle cx="35" cy="39" r="10" fill="#7b7bf7"/><circle cx="50" cy="39" r="9" fill="#7b7bf7"/><circle cx="65" cy="38" r="9" fill="#7b7bf7"/><circle cx="80" cy="37" r="10" fill="#7b7bf7"/><circle cx="95" cy="36" r="9" fill="#7b7bf7"/><circle cx="33.5" cy="50" r="10" fill="#7b7bf7"/><rect x="0" y="16" width="103" height="24" fill="#7b7bf7" opacity="1"/><ellipse cx="25" cy="25" rx="16" ry="9" fill="#66e860" filter="url(#b2)" transform="rotate(-25 25 25)"/><ellipse cx="25" cy="25" rx="12.0" ry="6.8" fill="#eef04e" filter="url(#b15)" transform="rotate(-25 25 25)"/><ellipse cx="24" cy="22" rx="6" ry="5" fill="#66e860" filter="url(#b2)"/><ellipse cx="24" cy="22" rx="4.8" ry="4.0" fill="#eef04e" filter="url(#b15)"/><ellipse cx="24" cy="22" rx="3.6" ry="3.0" fill="#ef6a4c" filter="url(#b1)"/><ellipse cx="60" cy="26" rx="3" ry="3" fill="#66e860" filter="url(#b2)"/><ellipse cx="52" cy="38" rx="3" ry="3" fill="#66e860" filter="url(#b2)"/></svg>
<div class="badge">2</div></div>
<div class="hm" style="left:544.3px;top:825px">
<svg width="102" height="76" viewBox="0 0 103 77" preserveAspectRatio="none" style="position:absolute;left:0;top:0"><rect x="5" y="10" width="40" height="1.2" fill="#d0d0d0" opacity="1"/><rect x="5" y="15" width="70" height="1" fill="#d0d0d0" opacity="1"/><rect x="5" y="18" width="75" height="1" fill="#d0d0d0" opacity="1"/><rect x="5" y="21" width="60" height="1" fill="#d0d0d0" opacity="1"/><circle cx="3.5" cy="2.5" r="5" fill="#7b7bf7"/><circle cx="33" cy="8" r="9" fill="#7b7bf7"/><circle cx="62" cy="8" r="10" fill="#7b7bf7"/><circle cx="78" cy="5" r="10" fill="#7b7bf7"/><circle cx="90" cy="12" r="10" fill="#7b7bf7"/><circle cx="97" cy="28" r="9" fill="#7b7bf7"/><circle cx="88" cy="38" r="9" fill="#7b7bf7"/><circle cx="31" cy="36" r="9" fill="#7b7bf7"/><circle cx="46" cy="28" r="10" fill="#7b7bf7"/><circle cx="60" cy="33" r="10" fill="#7b7bf7"/><circle cx="75" cy="37" r="9" fill="#7b7bf7"/><circle cx="86" cy="41" r="8" fill="#7b7bf7"/><circle cx="6" cy="33" r="11" fill="#7b7bf7"/><circle cx="34.5" cy="48" r="10" fill="#7b7bf7"/><rect x="55" y="0" width="48" height="20" fill="#7b7bf7" opacity="1"/><rect x="20" y="30" width="80" height="12" fill="#7b7bf7" opacity="1"/><rect x="85" y="15" width="18" height="30" fill="#7b7bf7" opacity="1"/></svg>
<div class="badge">3</div></div>
<div class="hm" style="left:656.3px;top:825px">
<svg width="102" height="76" viewBox="0 0 103 77" preserveAspectRatio="none" style="position:absolute;left:0;top:0"><rect x="5" y="10" width="40" height="1.2" fill="#d0d0d0" opacity="1"/><rect x="5" y="15" width="70" height="1" fill="#d0d0d0" opacity="1"/><rect x="5" y="18" width="75" height="1" fill="#d0d0d0" opacity="1"/><rect x="5" y="21" width="60" height="1" fill="#d0d0d0" opacity="1"/><circle cx="33" cy="6" r="9" fill="#7b7bf7"/><circle cx="14" cy="32" r="8" fill="#7b7bf7"/><circle cx="5" cy="38" r="9" fill="#7b7bf7"/><circle cx="9" cy="47" r="8" fill="#7b7bf7"/><circle cx="38" cy="42" r="10" fill="#7b7bf7"/><circle cx="40" cy="58" r="10" fill="#7b7bf7"/><circle cx="48" cy="70" r="10" fill="#7b7bf7"/><circle cx="60" cy="72" r="8" fill="#7b7bf7"/><circle cx="55" cy="50" r="9" fill="#7b7bf7"/><circle cx="67" cy="47" r="10" fill="#7b7bf7"/><circle cx="63" cy="19" r="9" fill="#7b7bf7"/><circle cx="75" cy="30" r="9" fill="#7b7bf7"/><circle cx="88" cy="8" r="12" fill="#7b7bf7"/><circle cx="95" cy="25" r="10" fill="#7b7bf7"/><circle cx="90" cy="40" r="10" fill="#7b7bf7"/><circle cx="97" cy="50" r="8" fill="#7b7bf7"/><rect x="30" y="40" width="40" height="20" fill="#7b7bf7" opacity="1"/><rect x="80" y="0" width="23" height="52" fill="#7b7bf7" opacity="1"/><ellipse cx="90" cy="9" rx="5" ry="5" fill="#66e860" filter="url(#b2)"/></svg>
<div class="badge">4</div></div>
<div class="hm" style="left:768.3px;top:825px">
<svg width="102" height="76" viewBox="0 0 103 77" preserveAspectRatio="none" style="position:absolute;left:0;top:0"><rect x="5" y="10" width="40" height="1.2" fill="#d0d0d0" opacity="1"/><rect x="5" y="15" width="70" height="1" fill="#d0d0d0" opacity="1"/><rect x="5" y="18" width="75" height="1" fill="#d0d0d0" opacity="1"/><rect x="5" y="21" width="60" height="1" fill="#d0d0d0" opacity="1"/><circle cx="34" cy="6" r="8" fill="#7b7bf7"/><circle cx="90" cy="11" r="8" fill="#7b7bf7"/><circle cx="65" cy="17" r="9" fill="#7b7bf7"/><circle cx="8" cy="40" r="9" fill="#7b7bf7"/><circle cx="23" cy="40" r="10" fill="#7b7bf7"/><circle cx="34" cy="50" r="10" fill="#7b7bf7"/><circle cx="51" cy="40" r="9" fill="#7b7bf7"/><circle cx="65" cy="40" r="10" fill="#7b7bf7"/><circle cx="78" cy="38" r="10" fill="#7b7bf7"/><circle cx="95" cy="32" r="11" fill="#7b7bf7"/><circle cx="92" cy="18" r="8" fill="#7b7bf7"/><rect x="0" y="30" width="103" height="14" fill="#7b7bf7" opacity="1"/><rect x="5" y="31" width="73" height="2.5" fill="#4a70f0" opacity="1"/><ellipse cx="73" cy="38" rx="3" ry="3" fill="#66e860" filter="url(#b2)"/><ellipse cx="94" cy="38" rx="3" ry="3" fill="#66e860" filter="url(#b2)"/></svg>
<div class="badge">5</div></div>
<div class="hm" style="left:880.3px;top:825px">
<svg width="102" height="76" viewBox="0 0 103 77" preserveAspectRatio="none" style="position:absolute;left:0;top:0"><rect x="0" y="0" width="103" height="77" fill="#5a5ce2" opacity="1"/><path d="M15 77L22 70L40 73L60 70L78 66L80 54L85 56L92 72L103 68V77Z" fill="#a0a0a8"/><text x="5" y="17" font-size="9" font-weight="bold" fill="#8c8cf0" opacity="0.9" font-family="Liberation Sans">Stories &amp; Copy</text><ellipse cx="43.5" cy="32.5" rx="31" ry="15" fill="#66e860" filter="url(#b2)"/><ellipse cx="43.5" cy="32.5" rx="26" ry="11" fill="#66e860" filter="url(#b2)"/><ellipse cx="43.5" cy="32.5" rx="23.4" ry="9.9" fill="#eef04e" filter="url(#b15)"/><ellipse cx="43.5" cy="32.5" rx="21.3" ry="9.0" fill="#ef6a4c" filter="url(#b1)"/><ellipse cx="97" cy="37" rx="11" ry="12" fill="#66e860" filter="url(#b2)"/><ellipse cx="97" cy="37" rx="9.3" ry="10.2" fill="#eef04e" filter="url(#b15)"/><ellipse cx="97" cy="37" rx="7.7" ry="8.4" fill="#ef6a4c" filter="url(#b1)"/><ellipse cx="74" cy="29" rx="14" ry="10" fill="#66e860" filter="url(#b2)"/><ellipse cx="74" cy="29" rx="8.4" ry="6.0" fill="#eef04e" filter="url(#b15)"/><ellipse cx="36" cy="53" rx="10" ry="10" fill="#66e860" filter="url(#b2)"/><ellipse cx="45" cy="60" rx="8" ry="6" fill="#66e860" filter="url(#b2)"/><ellipse cx="70" cy="18" rx="6" ry="6" fill="#66e860" filter="url(#b2)"/></svg>
<div class="badge">6</div></div>
<div class="hm" style="left:992.3px;top:825px">
<svg width="102" height="76" viewBox="0 0 103 77" preserveAspectRatio="none" style="position:absolute;left:0;top:0"><rect x="0" y="0" width="103" height="77" fill="#7b7bf7" opacity="1"/><path d="M0 10Q10 8 22 20L0 22Z" fill="#fff"/><ellipse cx="100" cy="10" rx="6" ry="13" fill="#fff" opacity="1"/><ellipse cx="40" cy="74" rx="12" ry="6" fill="#fff" opacity="1"/><ellipse cx="74" cy="48" rx="5" ry="3" fill="#fff" opacity="1"/><ellipse cx="3" cy="65" rx="4" ry="10" fill="#fff" opacity="1"/><rect x="5" y="25.5" width="70" height="2.5" fill="#4a70f0" opacity="1"/><ellipse cx="88.5" cy="31" rx="16" ry="11" fill="#66e860" filter="url(#b2)"/><ellipse cx="88.5" cy="31" rx="9.6" ry="6.6" fill="#eef04e" filter="url(#b15)"/><ellipse cx="88.5" cy="31" rx="5.1" ry="3.5" fill="#ef6a4c" filter="url(#b1)"/><ellipse cx="31" cy="5" rx="5" ry="5" fill="#66e860" filter="url(#b2)"/><ellipse cx="56" cy="50" rx="4" ry="4" fill="#66e860" filter="url(#b2)"/><ellipse cx="24" cy="70" rx="5" ry="5" fill="#66e860" filter="url(#b2)"/><ellipse cx="8.5" cy="36" rx="3" ry="3" fill="#66e860" filter="url(#b2)"/></svg>
<div class="badge">7</div></div>
<div class="hm" style="left:1104.3px;top:825px">
<svg width="102" height="76" viewBox="0 0 103 77" preserveAspectRatio="none" style="position:absolute;left:0;top:0"><rect x="0" y="0" width="103" height="77" fill="#7264dc" opacity="1"/><rect x="40" y="0" width="63" height="40" fill="#7868e0" opacity="1"/><path d="M0 0H7V20Q4 28 0 30Z" fill="#e2c49c"/><ellipse cx="70" cy="3" rx="9" ry="6" fill="#e2c49c" opacity="1"/><path d="M27 10Q33 8 40 14Q38 24 30 25Q26 18 27 10Z" fill="#e2c49c"/><path d="M32 38Q42 33 50 40Q58 36 65 48Q56 50 52 56Q45 48 35 46Q34 42 32 38Z" fill="#e2c49c"/><path d="M0 58Q10 56 18 62Q14 70 16 77H0Z" fill="#e2c49c"/><path d="M44 62Q50 66 54 64L56 77H46Z" fill="#e2c49c"/><ellipse cx="75" cy="76" rx="4" ry="3" fill="#e2c49c" opacity="1"/><ellipse cx="1" cy="45" rx="2" ry="4" fill="#e2c49c" opacity="1"/><text x="6" y="16" font-size="8.5" font-weight="bold" fill="#e8e4f8" opacity="0.8" font-family="Liberation Sans">Graphics &amp; Design</text></svg>
<div class="badge">8</div></div>
<div class="hm" style="left:1216.3px;top:825px">
<svg width="102" height="76" viewBox="0 0 103 77" preserveAspectRatio="none" style="position:absolute;left:0;top:0"><rect x="5" y="10" width="40" height="1.2" fill="#d0d0d0" opacity="1"/><rect x="5" y="15" width="70" height="1" fill="#d0d0d0" opacity="1"/><rect x="5" y="18" width="75" height="1" fill="#d0d0d0" opacity="1"/><rect x="5" y="21" width="60" height="1" fill="#d0d0d0" opacity="1"/><path d="M21 10Q24 2 38 3Q58 7 80 19V29H50Q32 26 21 14Z" fill="#7b7bf7"/><circle cx="93" cy="27" r="10" fill="#7b7bf7"/><circle cx="93" cy="27" r="10" fill="#7b7bf7"/><circle cx="92" cy="45" r="12" fill="#7b7bf7"/><circle cx="99" cy="52" r="9" fill="#7b7bf7"/><rect x="0" y="30" width="103" height="16" fill="#7b7bf7" opacity="1"/><circle cx="12" cy="44" r="9" fill="#7b7bf7"/><circle cx="33" cy="55" r="8" fill="#7b7bf7"/><circle cx="56" cy="50" r="9" fill="#7b7bf7"/><circle cx="66" cy="55" r="9" fill="#7b7bf7"/><circle cx="80" cy="55" r="8" fill="#7b7bf7"/><rect x="19" y="27" width="60" height="3" fill="#4a70f0" opacity="1"/><ellipse cx="85" cy="37" rx="6" ry="6" fill="#66e860" filter="url(#b2)"/><ellipse cx="99" cy="42" rx="3" ry="3" fill="#66e860" filter="url(#b2)"/></svg>
<div class="badge">9</div></div>
<div class="hm" style="left:320.3px;top:912px">
<svg width="102" height="76" viewBox="0 0 103 77" preserveAspectRatio="none" style="position:absolute;left:0;top:0"><rect x="0" y="0" width="103" height="77" fill="#7b7bf7" opacity="1"/><path d="M51 0H103V18Q95 22 88 20Q80 24 76 20Q70 24 60 22Q52 20 51 12Z" fill="#fff"/><circle cx="87" cy="10" r="10" fill="#7b7bf7"/><ellipse cx="3" cy="27" rx="4" ry="6" fill="#fff" opacity="1"/><ellipse cx="76" cy="74" rx="12" ry="8" fill="#fff" opacity="1"/><rect x="6" y="26" width="73" height="2.5" fill="#4a70f0" opacity="1"/></svg>
<div class="badge b2">10</div></div>
<div class="hm" style="left:432.3px;top:912px">
<svg width="102" height="76" viewBox="0 0 103 77" preserveAspectRatio="none" style="position:absolute;left:0;top:0"><rect x="0" y="0" width="103" height="77" fill="#7b7bf7" opacity="1"/><path d="M0 0H25V12Q18 16 8 14L0 16Z" fill="#fff"/><path d="M48 0H103V26Q95 22 85 22Q70 20 60 22Q52 18 48 8Z" fill="#fff"/><circle cx="92" cy="11" r="7.5" fill="#7b7bf7"/><circle cx="14.7" cy="29" r="7.5" fill="#6262d8"/><rect x="5" y="40" width="18" height="30" fill="#6a6ae0" opacity="1"/><ellipse cx="50.7" cy="37" rx="21" ry="14" fill="#66e860" filter="url(#b2)" transform="rotate(10 50.7 37)"/><ellipse cx="50.7" cy="37" rx="16.8" ry="11.2" fill="#eef04e" filter="url(#b15)" transform="rotate(10 50.7 37)"/><ellipse cx="50.7" cy="37" rx="12.6" ry="8.4" fill="#ef6a4c" filter="url(#b1)" transform="rotate(10 50.7 37)"/><ellipse cx="75" cy="60" rx="5" ry="5" fill="#66e860" filter="url(#b2)"/></svg>
<div class="badge b2">11</div></div>
<div class="hm" style="left:544.3px;top:912px">
<svg width="102" height="76" viewBox="0 0 103 77" preserveAspectRatio="none" style="position:absolute;left:0;top:0"><rect x="0" y="0" width="103" height="77" fill="#fff" opacity="1"/><rect x="5" y="10" width="40" height="1.2" fill="#d0d0d0" opacity="1"/><rect x="5" y="15" width="70" height="1" fill="#d0d0d0" opacity="1"/><rect x="5" y="18" width="75" height="1" fill="#d0d0d0" opacity="1"/><rect x="5" y="21" width="60" height="1" fill="#d0d0d0" opacity="1"/><rect x="0" y="0" width="103" height="52" fill="#7b7bf7" opacity="1"/><path d="M28 14Q38 10 50 16Q58 22 54 27Q44 30 34 27Q26 24 28 14Z" fill="#fff"/><rect x="0" y="0" width="8" height="8" fill="#fff" opacity="1"/><circle cx="12" cy="7" r="7" fill="#7b7bf7"/><path d="M0 50H103V55Q85 52 65 58Q50 54 35 58Q20 60 0 58Z" fill="#7b7bf7"/><circle cx="24.75" cy="65" r="7.5" fill="#7b7bf7"/><circle cx="34" cy="54" r="8" fill="#7b7bf7"/><circle cx="52" cy="52" r="7" fill="#7b7bf7"/><rect x="5" y="34" width="74" height="2.5" fill="#4a70f0" opacity="1"/><ellipse cx="97" cy="42" rx="4" ry="4" fill="#66e860" filter="url(#b2)"/></svg>
<div class="badge b2">12</div></div>
<div class="hm" style="left:656.3px;top:912px">
<svg width="102" height="76" viewBox="0 0 103 77" preserveAspectRatio="none" style="position:absolute;left:0;top:0"><rect x="0" y="0" width="103" height="77" fill="#7b7bf7" opacity="1"/><rect x="0" y="0" width="8" height="6" fill="#fff" opacity="1"/><rect x="80" y="0" width="23" height="6" fill="#fff" opacity="1"/><ellipse cx="101" cy="62" rx="5" ry="9" fill="#fff" opacity="1"/><rect x="4" y="17" width="77" height="2.5" fill="#4a70f0" opacity="1"/><ellipse cx="55" cy="33" rx="40" ry="13" fill="#66e860" filter="url(#b2)" transform="rotate(8 55 33)"/><ellipse cx="38" cy="48" rx="14" ry="14" fill="#66e860" filter="url(#b2)"/><ellipse cx="38" cy="48" rx="8.4" ry="8.4" fill="#eef04e" filter="url(#b15)"/><ellipse cx="92" cy="32" rx="12" ry="10" fill="#66e860" filter="url(#b2)" transform="rotate(-20 92 32)"/><ellipse cx="92" cy="32" rx="7.2" ry="6.0" fill="#eef04e" filter="url(#b15)" transform="rotate(-20 92 32)"/><ellipse cx="27" cy="25" rx="21" ry="12" fill="#66e860" filter="url(#b2)"/><ellipse cx="27" cy="25" rx="16.8" ry="9.6" fill="#eef04e" filter="url(#b15)"/><ellipse cx="27" cy="25" rx="13.0" ry="7.4" fill="#ef6a4c" filter="url(#b1)"/><ellipse cx="11" cy="69" rx="5" ry="5" fill="#66e860" filter="url(#b2)"/></svg>
<div class="badge b2">13</div></div>
<div class="hm" style="left:768.3px;top:912px">
<svg width="102" height="76" viewBox="0 0 103 77" preserveAspectRatio="none" style="position:absolute;left:0;top:0"><rect x="0" y="0" width="103" height="77" fill="#b5c2c2" opacity="1"/><rect x="0" y="0" width="103" height="22" fill="#6c6ce6" opacity="1"/><rect x="63" y="22" width="40" height="36" fill="#6c6ce6" opacity="1"/><circle cx="70" cy="52" r="10" fill="#6c6ce6"/><circle cx="45" cy="34" r="10" fill="#6c6ce6"/><circle cx="25" cy="43" r="13" fill="#5c5ce0"/><circle cx="30" cy="50" r="9" fill="#5c5ce0"/><circle cx="50" cy="36" r="8" fill="#6c6ce6"/><circle cx="20" cy="28" r="8" fill="#6c6ce6"/><circle cx="8" cy="40" r="7" fill="#6c6ce6"/><circle cx="79" cy="71" r="12" fill="#5c5ce0"/><text x="6" y="18" font-size="8.5" font-weight="bold" fill="#9898f0" opacity="0.8" font-family="Liberation Sans">Images &amp; Photography</text><ellipse cx="98" cy="37" rx="6" ry="6" fill="#66e860" filter="url(#b2)"/></svg>
<div class="badge b2">14</div></div>
<div class="hm" style="left:880.3px;top:912px">
<svg width="102" height="76" viewBox="0 0 103 77" preserveAspectRatio="none" style="position:absolute;left:0;top:0"><rect x="5" y="10" width="40" height="1.2" fill="#d0d0d0" opacity="1"/><rect x="5" y="15" width="70" height="1" fill="#d0d0d0" opacity="1"/><rect x="5" y="18" width="75" height="1" fill="#d0d0d0" opacity="1"/><rect x="5" y="21" width="60" height="1" fill="#d0d0d0" opacity="1"/><circle cx="16" cy="3.75" r="7" fill="#7b7bf7"/><circle cx="8" cy="40" r="11" fill="#7b7bf7"/><circle cx="20" cy="44" r="10" fill="#7b7bf7"/><circle cx="38" cy="46" r="10" fill="#7b7bf7"/><circle cx="55" cy="45" r="9" fill="#7b7bf7"/><circle cx="70" cy="40" r="10" fill="#7b7bf7"/><circle cx="82" cy="32" r="9" fill="#7b7bf7"/><circle cx="98" cy="30" r="10" fill="#7b7bf7"/><rect x="0" y="28" width="103" height="20" fill="#7b7bf7" opacity="1"/><circle cx="6" cy="26" r="6" fill="#7b7bf7"/><rect x="0" y="23" width="55" height="8" fill="#7b7bf7" opacity="1"/><circle cx="58" cy="27" r="5" fill="#7b7bf7"/><circle cx="10" cy="52" r="8" fill="#7b7bf7"/><circle cx="28" cy="53" r="9" fill="#7b7bf7"/><circle cx="45" cy="54" r="8" fill="#7b7bf7"/><circle cx="62" cy="50" r="9" fill="#7b7bf7"/><circle cx="85" cy="45" r="9" fill="#7b7bf7"/><circle cx="68.7" cy="71" r="7.5" fill="#7b7bf7"/><rect x="5.7" y="40.5" width="73" height="2.3" fill="#4a70f0" opacity="1"/><ellipse cx="98" cy="35" rx="8" ry="8" fill="#66e860" filter="url(#b2)"/><ellipse cx="98" cy="35" rx="5.8" ry="5.8" fill="#eef04e" filter="url(#b15)"/><ellipse cx="98" cy="35" rx="4.4" ry="4.4" fill="#ef6a4c" filter="url(#b1)"/></svg>
<div class="badge b2">15</div></div>
<div class="hm" style="left:992.3px;top:912px">
<svg width="102" height="76" viewBox="0 0 103 77" preserveAspectRatio="none" style="position:absolute;left:0;top:0"><rect x="5" y="10" width="40" height="1.2" fill="#d0d0d0" opacity="1"/><rect x="5" y="15" width="70" height="1" fill="#d0d0d0" opacity="1"/><rect x="5" y="18" width="75" height="1" fill="#d0d0d0" opacity="1"/><rect x="5" y="21" width="60" height="1" fill="#d0d0d0" opacity="1"/><circle cx="16" cy="2.25" r="7" fill="#7b7bf7"/><circle cx="10" cy="35" r="10" fill="#7b7bf7"/><circle cx="22" cy="40" r="11" fill="#7b7bf7"/><circle cx="37" cy="34" r="9" fill="#7b7bf7"/><circle cx="50" cy="34" r="9" fill="#7b7bf7"/><circle cx="62" cy="36" r="9" fill="#7b7bf7"/><circle cx="12" cy="45" r="8" fill="#7b7bf7"/><rect x="0" y="29" width="68" height="12" fill="#7b7bf7" opacity="1"/><circle cx="33.5" cy="52" r="7.5" fill="#7b7bf7"/><circle cx="94" cy="34.5" r="8.5" fill="#7b7bf7"/><rect x="5.7" y="30.75" width="73" height="2.3" fill="#4a70f0" opacity="1"/></svg>
<div class="badge b2">16</div></div>
<div class="hm" style="left:1104.3px;top:912px">
<svg width="102" height="76" viewBox="0 0 103 77" preserveAspectRatio="none" style="position:absolute;left:0;top:0"><rect x="5" y="10" width="40" height="1.2" fill="#d0d0d0" opacity="1"/><rect x="5" y="15" width="70" height="1" fill="#d0d0d0" opacity="1"/><rect x="5" y="18" width="75" height="1" fill="#d0d0d0" opacity="1"/><rect x="5" y="21" width="60" height="1" fill="#d0d0d0" opacity="1"/><rect x="5" y="19.5" width="43.5" height="23.5" fill="#a89c90" opacity="1"/><rect x="50" y="19.5" width="40.5" height="23.5" fill="#a0b0b8" opacity="1"/><rect x="5" y="47" width="16.5" height="26" fill="#d0b8b0" opacity="1"/><rect x="24.5" y="47" width="36" height="26" fill="#787068" opacity="1"/><rect x="62" y="47" width="34.5" height="26" fill="#989898" opacity="1"/><circle cx="17" cy="3" r="9" fill="#7b7bf7"/><circle cx="53.7" cy="31.5" r="7.5" fill="#5c5ce0"/><circle cx="70" cy="37" r="8" fill="#7b7bf7"/><circle cx="85" cy="33" r="9" fill="#7b7bf7"/><circle cx="97" cy="35" r="9" fill="#7b7bf7"/><circle cx="33.5" cy="52.5" r="7.5" fill="#5c5ce0"/></svg>
<div class="badge b2">17</div></div>
<div class="hm" style="left:1216.3px;top:912px">
<svg width="102" height="76" viewBox="0 0 103 77" preserveAspectRatio="none" style="position:absolute;left:0;top:0"><rect x="0" y="0" width="103" height="77" fill="#bcdade" opacity="1"/><ellipse cx="20" cy="50" rx="20" ry="25" fill="#a8ccc8" opacity="1"/><text x="6" y="17" font-size="8" font-weight="bold" fill="#ffffff" opacity="0.9" font-family="Liberation Sans">Video/Audio</text><circle cx="17" cy="3.5" r="8" fill="#6068ea"/><circle cx="27" cy="39" r="7.5" fill="#6068ea"/><circle cx="35" cy="50" r="9" fill="#6068ea"/><circle cx="55" cy="25" r="7.5" fill="#6068ea"/><circle cx="72.5" cy="20.5" r="8" fill="#6068ea"/><circle cx="93.5" cy="20" r="7.5" fill="#6068ea"/><circle cx="58" cy="46" r="10" fill="#6068ea"/><circle cx="70" cy="42" r="9" fill="#6068ea"/><circle cx="85" cy="42" r="11" fill="#6068ea"/><circle cx="97" cy="40" r="9" fill="#6068ea"/><circle cx="88" cy="56" r="8" fill="#6068ea"/><rect x="86" y="50" width="14" height="27" fill="#6068ea" opacity="1"/></svg>
<div class="badge b2">18</div></div>
</body></html>
